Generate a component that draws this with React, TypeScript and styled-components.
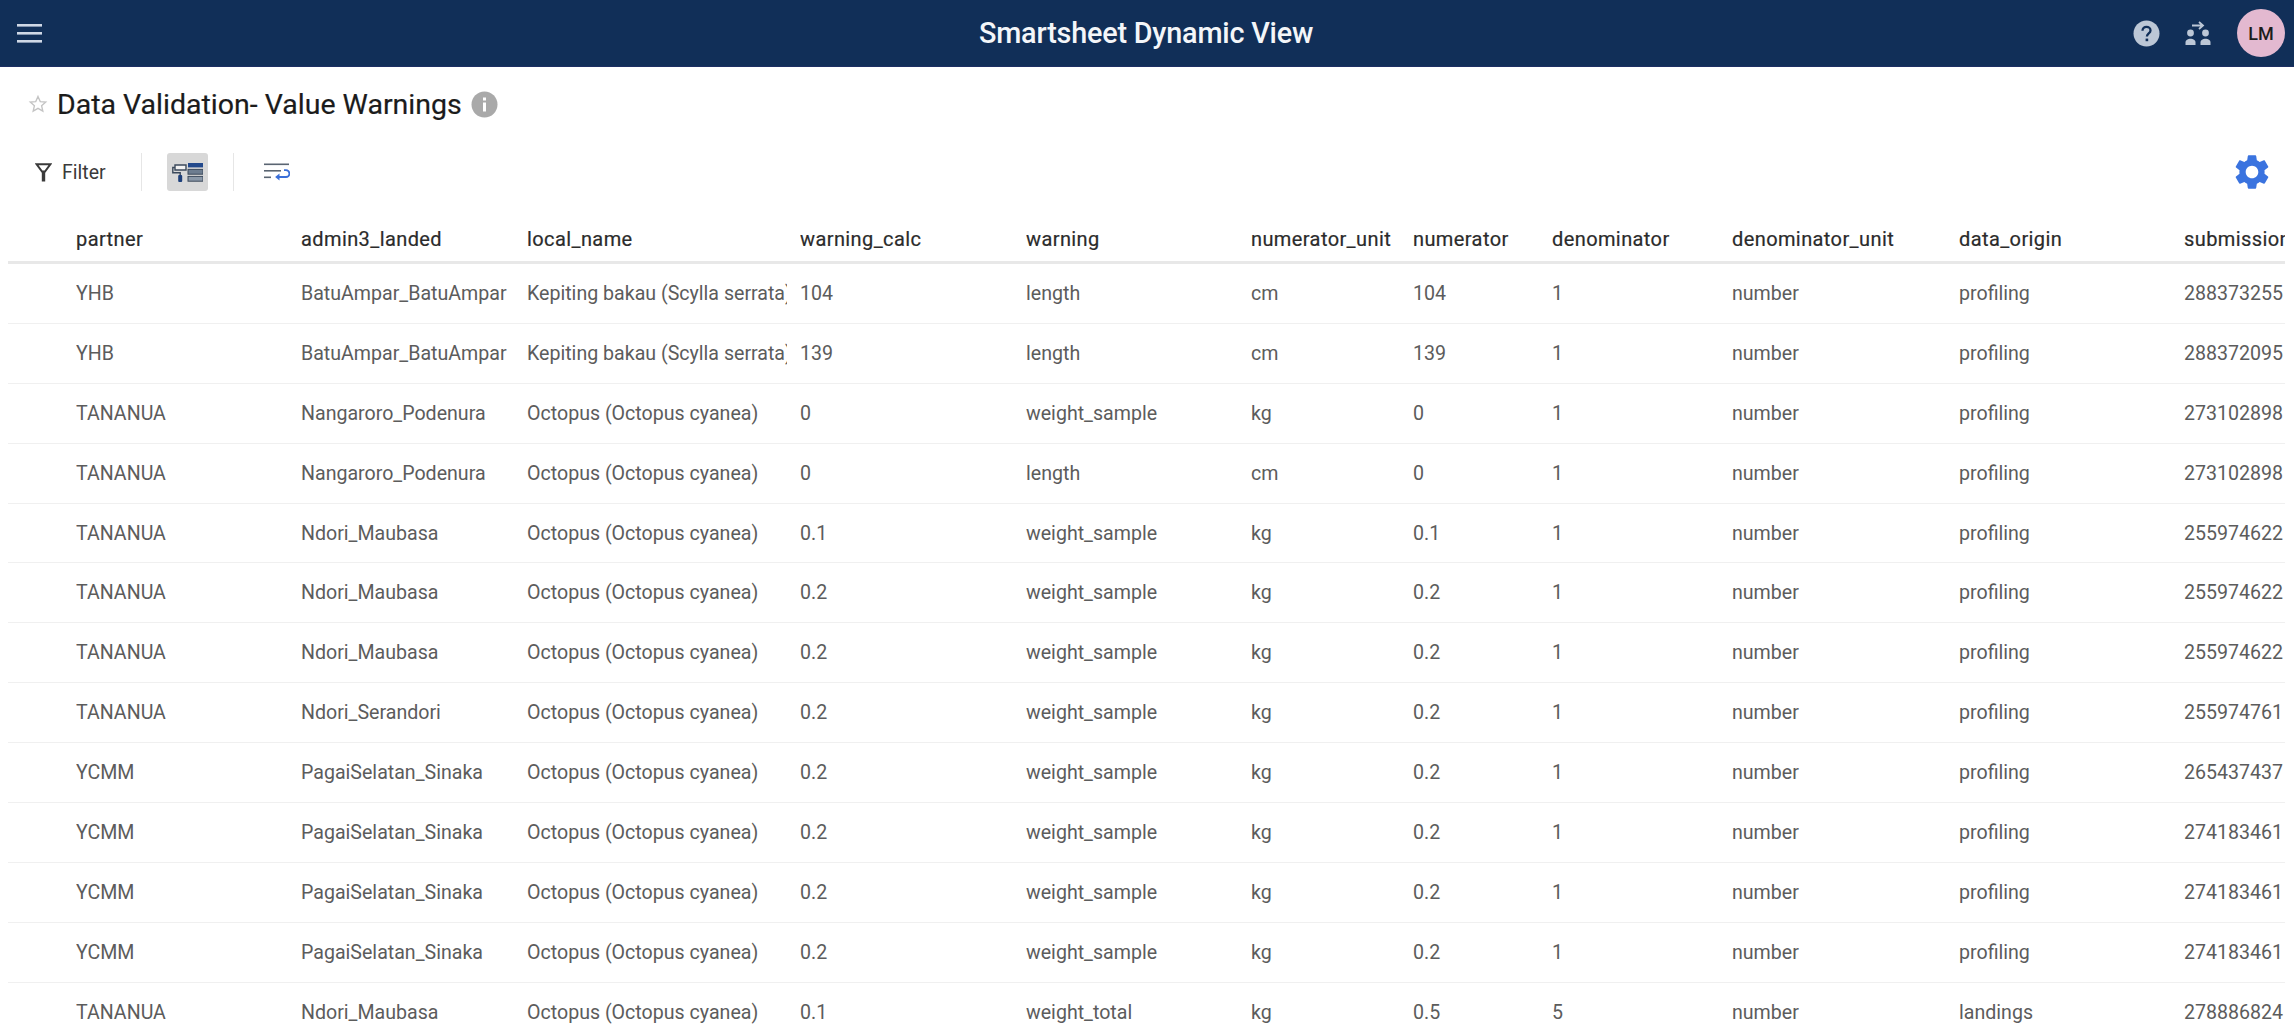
import React from 'react';
import styled, { createGlobalStyle } from 'styled-components';

const GlobalStyle = createGlobalStyle`
  html, body {
    margin: 0;
    padding: 0;
    background: #ffffff;
    font-family: Roboto, "Liberation Sans", sans-serif;
    overflow: hidden;
  }
`;

const Page = styled.div`
  width: 2294px;
  height: 1034px;
  overflow: hidden;
  display: flex;
  flex-direction: column;
`;

const Header = styled.header`
  flex: none;
  height: 67px;
  box-sizing: border-box;
  background: #112f58;
  border-bottom: 1px solid #1d2f63;
  display: grid;
  grid-template-columns: 962px auto 1fr;
  align-items: center;
  padding: 0 9px 0 17px;
`;

const HeaderTitle = styled.div`
  color: #f4f6f9;
  font-size: 28.8px;
  font-weight: 500;
  letter-spacing: -0.2px;
`;

const HeaderRight = styled.div`
  display: flex;
  align-items: center;
  justify-content: flex-end;
`;

const Hamburger = styled.svg`
  width: 25px;
  height: 20px;
  display: block;
`;

const HelpIcon = styled.svg`
  width: 27px;
  height: 27px;
  display: block;
  margin-right: 25px;
`;

const TransferIcon = styled.svg`
  width: 26px;
  height: 26px;
  display: block;
  margin-right: 26px;
`;

const Avatar = styled.div`
  width: 48px;
  height: 48px;
  border-radius: 50%;
  background: #e3b9d0;
  color: #1c1c1c;
  font-size: 18px;
  font-weight: 500;
  display: flex;
  align-items: center;
  justify-content: center;
`;

const TitleRow = styled.div`
  flex: none;
  height: 74px;
  display: flex;
  align-items: center;
  padding-left: 28px;
`;

const StarIcon = styled.svg`
  width: 20px;
  height: 20px;
  display: block;
  margin-right: 9px;
`;

const Title = styled.h1`
  margin: 0 9px 0 0;
  color: #1b1b1b;
  font-size: 28.5px;
  font-weight: 400;
  -webkit-text-stroke: 0.2px #1b1b1b;
`;

const InfoIcon = styled.svg`
  width: 27px;
  height: 27px;
  display: block;
`;

const Toolbar = styled.div`
  flex: none;
  height: 38px;
  margin-top: 12px;
  display: flex;
  align-items: center;
  padding: 0 21px 0 35px;
`;

const FilterButton = styled.div`
  display: flex;
  align-items: center;
  gap: 10px;
  color: #3a3a3a;
  font-size: 19.5px;
  width: 106px;
`;

const FilterIcon = styled.svg`
  width: 17px;
  height: 19px;
  display: block;
`;

const Divider = styled.div`
  width: 1px;
  height: 38px;
  background: #e6e6e6;
`;

const RollerButton = styled.div`
  width: 41px;
  height: 38px;
  margin: 0 25px;
  background: #d8d8d8;
  border-radius: 3px;
  display: flex;
  align-items: center;
  justify-content: center;
`;

const RollerIcon = styled.svg`
  width: 31px;
  height: 19px;
  display: block;
`;

const WrapIcon = styled.svg`
  width: 26px;
  height: 18px;
  display: block;
  margin-left: 30px;
`;

const Spacer = styled.div`
  flex: 1;
`;

const GearIcon = styled.svg`
  width: 42px;
  height: 42px;
  display: block;
`;

const Table = styled.div`
  flex: none;
  width: 2277px;
  margin: 30px 0 0 8px;
  overflow: hidden;
`;

const GRID = '68px 225px 226px 273px 226px 225px 162px 139px 180px 227px 225px 101px';

const HeadRow = styled.div`
  display: grid;
  grid-template-columns: ${GRID};
  height: 43px;
  box-sizing: border-box;
  border-bottom: 3px solid #e8e8e8;
  align-items: center;
  padding-bottom: 5px;
`;

const HeadCell = styled.div`
  color: #2b2b2b;
  font-size: 20px;
  font-weight: 400;
  letter-spacing: 0.4px;
  -webkit-text-stroke: 0.2px #2b2b2b;
  white-space: nowrap;
  overflow: hidden;
`;

const Row = styled.div`
  display: grid;
  grid-template-columns: ${GRID};
  height: 59.9px;
  box-sizing: border-box;
  border-bottom: 1px solid #f0f0f0;
  align-items: center;
`;

const Cell = styled.div`
  color: #5c5c5c;
  font-size: 19.6px;
  white-space: nowrap;
  overflow: hidden;
  margin-right: 13px;

  &:last-child {
    margin-right: 0;
  }
`;

const columns = [
  'partner',
  'admin3_landed',
  'local_name',
  'warning_calc',
  'warning',
  'numerator_unit',
  'numerator',
  'denominator',
  'denominator_unit',
  'data_origin',
  'submission_id',
];

const rows: string[][] = [
  ['YHB', 'BatuAmpar_BatuAmpar', 'Kepiting bakau (Scylla serrata)', '104', 'length', 'cm', '104', '1', 'number', 'profiling', '288373255'],
  ['YHB', 'BatuAmpar_BatuAmpar', 'Kepiting bakau (Scylla serrata)', '139', 'length', 'cm', '139', '1', 'number', 'profiling', '288372095'],
  ['TANANUA', 'Nangaroro_Podenura', 'Octopus (Octopus cyanea)', '0', 'weight_sample', 'kg', '0', '1', 'number', 'profiling', '273102898'],
  ['TANANUA', 'Nangaroro_Podenura', 'Octopus (Octopus cyanea)', '0', 'length', 'cm', '0', '1', 'number', 'profiling', '273102898'],
  ['TANANUA', 'Ndori_Maubasa', 'Octopus (Octopus cyanea)', '0.1', 'weight_sample', 'kg', '0.1', '1', 'number', 'profiling', '255974622'],
  ['TANANUA', 'Ndori_Maubasa', 'Octopus (Octopus cyanea)', '0.2', 'weight_sample', 'kg', '0.2', '1', 'number', 'profiling', '255974622'],
  ['TANANUA', 'Ndori_Maubasa', 'Octopus (Octopus cyanea)', '0.2', 'weight_sample', 'kg', '0.2', '1', 'number', 'profiling', '255974622'],
  ['TANANUA', 'Ndori_Serandori', 'Octopus (Octopus cyanea)', '0.2', 'weight_sample', 'kg', '0.2', '1', 'number', 'profiling', '255974761'],
  ['YCMM', 'PagaiSelatan_Sinaka', 'Octopus (Octopus cyanea)', '0.2', 'weight_sample', 'kg', '0.2', '1', 'number', 'profiling', '265437437'],
  ['YCMM', 'PagaiSelatan_Sinaka', 'Octopus (Octopus cyanea)', '0.2', 'weight_sample', 'kg', '0.2', '1', 'number', 'profiling', '274183461'],
  ['YCMM', 'PagaiSelatan_Sinaka', 'Octopus (Octopus cyanea)', '0.2', 'weight_sample', 'kg', '0.2', '1', 'number', 'profiling', '274183461'],
  ['YCMM', 'PagaiSelatan_Sinaka', 'Octopus (Octopus cyanea)', '0.2', 'weight_sample', 'kg', '0.2', '1', 'number', 'profiling', '274183461'],
  ['TANANUA', 'Ndori_Maubasa', 'Octopus (Octopus cyanea)', '0.1', 'weight_total', 'kg', '0.5', '5', 'number', 'landings', '278886824'],
];

const App: React.FC = () => {
  return (
    <Page>
      <GlobalStyle />
      <Header>
        <Hamburger viewBox="0 0 25 20">
          <rect x="0" y="1" width="25" height="2.6" fill="#cfd8e6" />
          <rect x="0" y="9" width="25" height="2.6" fill="#cfd8e6" />
          <rect x="0" y="17" width="25" height="2.6" fill="#cfd8e6" />
        </Hamburger>
        <HeaderTitle>Smartsheet Dynamic View</HeaderTitle>
        <HeaderRight>
          <HelpIcon viewBox="0 0 27 27">
            <circle cx="13.5" cy="13.5" r="13" fill="#bcc7d6" />
            <path d="M9.5 10.8c0-2.4 1.8-3.9 4-3.9s4 1.4 4 3.5c0 2.9-3.6 3-3.6 6" fill="none" stroke="#112f58" strokeWidth="2.3" />
            <rect x="12.6" y="18.6" width="2.6" height="2.6" fill="#112f58" />
          </HelpIcon>
          <TransferIcon viewBox="0 0 26 26">
            <g fill="#bcc7d6">
              <circle cx="5.5" cy="13" r="3.4" />
              <path d="M0.5 25v-2.6c0-2.2 2.6-3.6 5-3.6s5 1.4 5 3.6V25z" />
              <circle cx="20.5" cy="13" r="3.4" />
              <path d="M15.5 25v-2.6c0-2.2 2.6-3.6 5-3.6s5 1.4 5 3.6V25z" />
            </g>
            <path d="M7 5.5h10M14 2l4 3.5-4 3.5" fill="none" stroke="#bcc7d6" strokeWidth="1.8" />
          </TransferIcon>
          <Avatar>LM</Avatar>
        </HeaderRight>
      </Header>

      <TitleRow>
        <StarIcon viewBox="0 0 24 24">
          <path d="M12 3l2.7 6.1 6.6.6-5 4.4 1.5 6.5L12 17.2l-5.8 3.4 1.5-6.5-5-4.4 6.6-.6z" fill="none" stroke="#c4c4c4" strokeWidth="1.6" />
        </StarIcon>
        <Title>Data Validation- Value Warnings</Title>
        <InfoIcon viewBox="0 0 27 27">
          <circle cx="13.5" cy="13.5" r="13" fill="#a9a9a9" />
          <rect x="12" y="11.5" width="3" height="9" fill="#ffffff" />
          <rect x="12" y="6.5" width="3" height="3" fill="#ffffff" />
        </InfoIcon>
      </TitleRow>

      <Toolbar>
        <FilterButton>
          <FilterIcon viewBox="0 0 17 19">
            <path d="M1.5 1.2h14L10 8.5H7z" fill="none" stroke="#3a3a3a" strokeWidth="2" />
            <path d="M6.8 8h3.4v10.5H6.8z" fill="#3a3a3a" />
          </FilterIcon>
          Filter
        </FilterButton>
        <Divider />
        <RollerButton>
          <RollerIcon viewBox="0 0 31 19">
            <path d="M3 2h11v5H3z" fill="#f2f2f2" stroke="#3c4a5c" strokeWidth="1.4" />
            <path d="M3 4.5H0.8v5.2h7.4v2.5" fill="none" stroke="#3c4a5c" strokeWidth="1.4" />
            <rect x="6.2" y="12" width="4" height="7" rx="1" fill="#1d3f7a" />
            <rect x="16" y="0" width="15" height="4.4" fill="#23498c" />
            <rect x="16" y="6.4" width="15" height="4.8" fill="#6d7d90" stroke="#3c4a5c" strokeWidth="1" />
            <rect x="16" y="13.4" width="15" height="4.8" fill="#8a98a8" stroke="#3c4a5c" strokeWidth="1" />
          </RollerIcon>
        </RollerButton>
        <Divider />
        <WrapIcon viewBox="0 0 26 18">
          <rect x="0" y="0.5" width="25" height="1.6" fill="#5a6572" />
          <rect x="0" y="7" width="17" height="1.6" fill="#5a6572" />
          <rect x="0" y="13.5" width="7" height="1.6" fill="#5a6572" />
          <path d="M20 7.2h2a3.4 3.4 0 0 1 0 6.8h-8" fill="none" stroke="#3a6fd8" strokeWidth="1.8" />
          <path d="M15.5 10.4v7.2l-4.4-3.6z" fill="#3a6fd8" />
        </WrapIcon>
        <Spacer />
        <GearIcon viewBox="0 0 24 24">
          <path
            fill="#3a73df"
            d="M19.14 12.94c.04-.3.06-.61.06-.94 0-.32-.02-.64-.07-.94l2.03-1.58c.18-.14.23-.41.12-.61l-1.92-3.32c-.12-.22-.37-.29-.59-.22l-2.39.96c-.5-.38-1.03-.7-1.62-.94l-.36-2.54c-.04-.24-.24-.41-.48-.41h-3.84c-.24 0-.43.17-.47.41l-.36 2.54c-.59.24-1.13.57-1.62.94l-2.39-.96c-.22-.08-.47 0-.59.22L2.74 8.87c-.12.21-.08.47.12.61l2.03 1.58c-.05.3-.09.63-.09.94s.02.64.07.94l-2.03 1.58c-.18.14-.23.41-.12.61l1.92 3.32c.12.22.37.29.59.22l2.39-.96c.5.38 1.03.7 1.62.94l.36 2.54c.05.24.24.41.48.41h3.84c.24 0 .44-.17.47-.41l.36-2.54c.59-.24 1.13-.56 1.62-.94l2.39.96c.22.08.47 0 .59-.22l1.92-3.32c.12-.22.07-.47-.12-.61l-2.01-1.58zM12 15.6c-1.98 0-3.6-1.62-3.6-3.6s1.62-3.6 3.6-3.6 3.6 1.62 3.6 3.6-1.62 3.6-3.6 3.6z"
          />
        </GearIcon>
      </Toolbar>

      <Table>
        <HeadRow>
          <div />
          {columns.map((c) => (
            <HeadCell key={c}>{c}</HeadCell>
          ))}
        </HeadRow>
        {rows.map((row, i) => (
          <Row key={i}>
            <div />
            {row.map((value, j) => (
              <Cell key={j}>{value}</Cell>
            ))}
          </Row>
        ))}
      </Table>
    </Page>
  );
};

export default App;
